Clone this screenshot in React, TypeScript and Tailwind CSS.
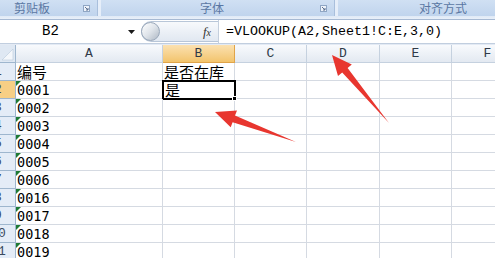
import React from 'react';

const cols = ['A', 'B', 'C', 'D', 'E', 'F'];
const ids = ['0001', '0002', '0003', '0004', '0005', '0006', '0016', '0017', '0018', '0019'];
const cjk = '"Noto Sans CJK SC", "Noto Sans", sans-serif';

function Launcher() {
  return (
    <svg width="7" height="7" viewBox="0 0 7 7" className="shrink-0">
      <rect x="0.5" y="0.5" width="6" height="6" fill="#eef3fa" stroke="#8fa6c4" />
      <path d="M2 2 L5 5 M5 3 L5 5 L3 5" stroke="#5d7190" strokeWidth="1" fill="none" />
    </svg>
  );
}

function RowHead({ n, active }: { n: number; active?: boolean }) {
  return (
    <div
      className={`h-[18px] overflow-hidden border-r border-b border-[#9eb6ce] ${
        active ? 'bg-[#f7cf85]' : 'bg-[#e4ecf7]'
      }`}
    >
      <div className="w-[28px] -ml-[16px] text-center text-[13px] leading-[18px] text-[#3b4a5e]" style={{ fontFamily: '"Liberation Mono", monospace' }}>
        {n}
      </div>
    </div>
  );
}

export default function App() {
  return (
    <div className="relative w-[495px] h-[258px] overflow-hidden bg-white">
      {/* ribbon group labels */}
      <div className="flex h-[16px] bg-gradient-to-b from-[#d0e0f3] to-[#c0d4ed] text-[12px] leading-[16px] text-[#5a77a3]" style={{ fontFamily: cjk }}>
        <div className="w-[97px] flex items-center pl-[14px] pr-[7px] justify-between">
          <span>剪贴板</span>
          <Launcher />
        </div>
        <div className="w-[4px] border-l border-[#a9bfdc] bg-[#e6eef9]" />
        <div className="w-[233px] flex items-center justify-between pr-[7px]">
          <span className="w-full text-center pl-[3px]">字体</span>
          <Launcher />
        </div>
        <div className="w-[4px] border-l border-[#a9bfdc] bg-[#e6eef9]" />
        <div className="flex-1 flex items-center pl-[81px]">
          <span>对齐方式</span>
        </div>
      </div>
      <div className="h-[4px] bg-gradient-to-b from-[#dfe9f6] to-[#e9f0f9] border-b border-[#a6b9d3]" />

      {/* formula bar */}
      <div className="flex h-[23px] items-stretch bg-white">
        <div className="w-[101px] text-center text-[14px] leading-[23px] text-black" style={{ fontFamily: '"Liberation Mono", monospace' }}>
          B2
        </div>
        <div className="w-[40px] flex items-center justify-end pr-[6px]">
          <svg width="7" height="4" viewBox="0 0 7 4">
            <path d="M0 0 L7 0 L3.5 4 Z" fill="#1a1a1a" />
          </svg>
        </div>
        <div className="w-[77px] my-[1px] flex items-center justify-between rounded-l-full border border-r-0 border-[#b8c6d8] bg-gradient-to-b from-[#f7f9fc] to-[#e1e8f1] pr-[7px]">
          <div className="w-[19px] h-[19px] rounded-full border border-[#9aa8ba] bg-gradient-to-br from-[#ffffff] via-[#dfe4ea] to-[#aeb8c4] -ml-[1px]" />
          <span className="italic text-[13px] text-[#333] pt-[1px]" style={{ fontFamily: '"Liberation Serif", serif' }}>
            f<span className="text-[10px]">x</span>
          </span>
        </div>
        <div className="w-[1px] bg-[#c4cfdd]" />
        <div className="flex-1 pl-[7px] text-[13.33px] leading-[23px] text-black whitespace-nowrap" style={{ fontFamily: '"Liberation Mono", monospace' }}>
          =VLOOKUP(A2,Sheet1!C:E,3,0)
        </div>
      </div>
      <div className="h-[2px] bg-[#e3eaf4] border-t border-[#c1cedf]" />

      {/* sheet grid */}
      <div className="grid grid-cols-[16px_147px_72px_72px_73px_72px_72px]">
        {/* header row */}
        <div className="relative h-[18px] border-r border-b border-[#9eb6ce] bg-[#dfe8f3]">
          <svg width="15" height="17" viewBox="0 0 15 17" className="absolute left-0 top-0">
            <path d="M13 4 L13 15 L2 15 Z" fill="#f4f7fb" stroke="#b9c9dc" strokeWidth="0.6" />
          </svg>
        </div>
        {cols.map((c) => (
          <div
            key={c}
            className={`h-[18px] border-r border-b text-center text-[13px] leading-[18px] text-[#2f3a48] ${
              c === 'B'
                ? 'border-[#e0a449] bg-gradient-to-b from-[#fbe1b0] to-[#f3c46c]'
                : 'border-[#c5d1df] bg-gradient-to-b from-[#f8fafd] to-[#e3e9f1]'
            }`}
            style={{ fontFamily: '"Liberation Mono", monospace' }}
          >
            {c}
          </div>
        ))}

        {/* row 1 */}
        <RowHead n={1} />
        <div className="h-[18px] border-r border-b border-[#d5dae2] pl-[1px] text-[15px] leading-[18px] text-black" style={{ fontFamily: cjk }}>
          编号
        </div>
        <div className="h-[18px] border-r border-b border-[#d5dae2] pl-[1px] text-[15px] leading-[18px] text-black" style={{ fontFamily: cjk }}>
          是否在库
        </div>
        {[0, 1, 2, 3].map((i) => (
          <div key={i} className="h-[18px] border-r border-b border-[#d5dae2]" />
        ))}

        {ids.map((id, r) => (
          <React.Fragment key={id}>
            <RowHead n={r + 2} active={r === 0} />
            <div className="relative h-[18px] border-r border-b border-[#d5dae2] pl-[1px] text-[13.5px] leading-[19px] text-black" style={{ fontFamily: '"DejaVu Sans Mono", monospace' }}>
              <svg width="5" height="5" viewBox="0 0 5 5" className="absolute left-0 top-0">
                <path d="M0 0 L5 0 L0 5 Z" fill="#1f7a35" />
              </svg>
              {id}
            </div>
            {r === 0 ? (
              <div className="relative h-[18px] border-b border-r border-[#d5dae2]">
                <div className="absolute -left-[1px] -top-[1px] w-[74px] h-[20px] border-2 border-black pl-[1px] text-[15px] leading-[16px] text-black" style={{ fontFamily: cjk }}>
                  是
                </div>
                <div className="absolute -right-[3px] -bottom-[3px] w-[5px] h-[5px] bg-black border border-white" />
              </div>
            ) : (
              <div className="h-[18px] border-r border-b border-[#d5dae2]" />
            )}
            {[0, 1, 2, 3].map((i) => (
              <div key={i} className="h-[18px] border-r border-b border-[#d5dae2]" />
            ))}
          </React.Fragment>
        ))}
      </div>

      {/* annotation arrows */}
      <svg width="495" height="258" viewBox="0 0 495 258" className="absolute left-0 top-0 pointer-events-none">
        <path d="M215 112 L237 110.5 L235 115.6 L296 142 L232.6 122.2 L230.7 127.3 Z" fill="#e8362f" />
        <path d="M332 55 L351.8 64.5 L347.6 68.1 L389 123 L342.2 72.6 L338 76.1 Z" fill="#e8362f" />
      </svg>
    </div>
  );
}
